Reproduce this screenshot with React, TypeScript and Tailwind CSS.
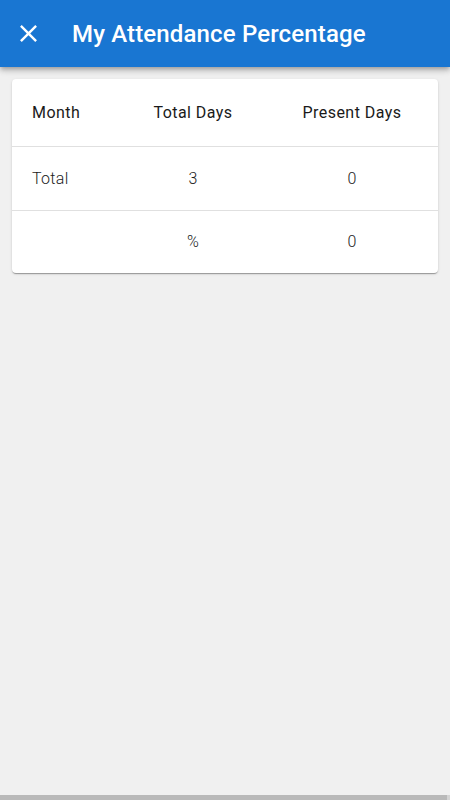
import React from "react";

const rows = [
  { label: "Total", total: "3", present: "0" },
  { label: "", total: "%", present: "0" },
];

const CloseIcon = () => (
  <svg viewBox="0 0 24 24" className="w-[29px] h-[29px]" fill="white">
    <path d="M19 6.41L17.59 5 12 10.59 6.41 5 5 6.41 10.59 12 5 17.59 6.41 19 12 13.41 17.59 19 19 17.59 13.41 12z" />
  </svg>
);

export default function App() {
  return (
    <div
      className="h-[800px] w-[450px] flex flex-col bg-[#f0f0f0] overflow-hidden"
      style={{ fontFamily: "Roboto, 'Liberation Sans', sans-serif" }}
    >
      {/* app bar */}
      <div className="h-[67px] shrink-0 bg-[#1976d2] flex items-center shadow-[0_2px_4px_-1px_rgba(0,0,0,0.2),0_4px_5px_0_rgba(0,0,0,0.14),0_1px_10px_0_rgba(0,0,0,0.12)] relative z-10">
        <div className="w-[72px] flex justify-center pr-[15px]">
          <CloseIcon />
        </div>
        <h1 className="text-white text-[24px] font-medium tracking-[0.15px]">
          My Attendance Percentage
        </h1>
      </div>

      {/* table card */}
      <div className="mx-3 mt-3 bg-white rounded shadow-[0_2px_1px_-1px_rgba(0,0,0,0.2),0_1px_1px_0_rgba(0,0,0,0.14),0_1px_3px_0_rgba(0,0,0,0.12)]">
        <div className="grid grid-cols-[108px_146px_172px] h-[68px] items-center border-b border-[#e0e0e0] text-[16px] font-normal tracking-[0.45px] text-[#1a1a1a]">
          <div className="pl-5">Month</div>
          <div className="text-center">Total Days</div>
          <div className="text-center">Present Days</div>
        </div>
        {rows.map((r, i) => (
          <div
            key={i}
            className={
              "grid grid-cols-[108px_146px_172px] items-center text-[16px] font-light tracking-[0.3px] text-[#1c1c1c] " +
              (i === 0 ? "h-[64px] border-b border-[#e0e0e0]" : "h-[62px]")
            }
          >
            <div className="pl-5">{r.label}</div>
            <div className="text-center">{r.total}</div>
            <div className="text-center">{r.present}</div>
          </div>
        ))}
      </div>

      <div className="flex-1" />
      {/* bottom scrollbar */}
      <div className="h-[5px] flex shrink-0">
        <div className="flex-1 bg-[#b9b9b9]" />
        <div className="w-[3px] bg-[#d4d4d4]" />
      </div>
    </div>
  );
}
